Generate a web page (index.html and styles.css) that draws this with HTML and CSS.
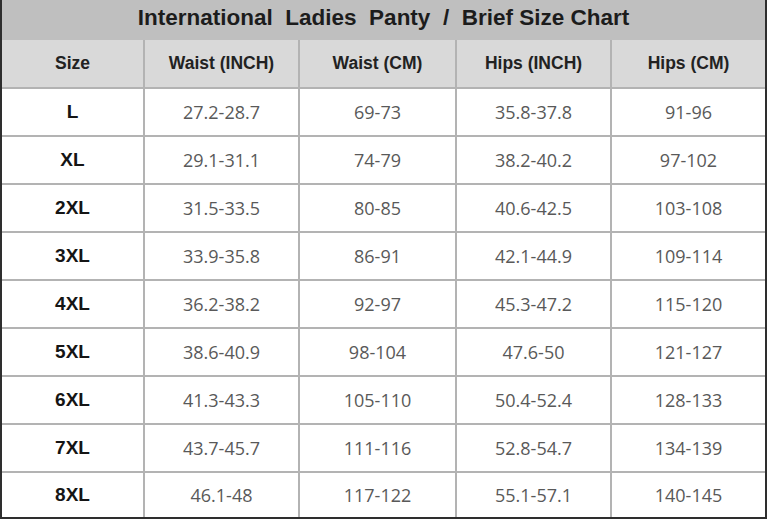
FILE: index.html
```html
<!DOCTYPE html>
<html>
<head>
<meta charset="utf-8">
<link rel="stylesheet" href="styles.css">
</head>
<body>
<div class="chart">
  <div class="title">International  Ladies  Panty  /  Brief Size Chart</div>
  <div class="grid">
    <div class="cell head first">Size</div>
    <div class="cell head">Waist (INCH)</div>
    <div class="cell head">Waist (CM)</div>
    <div class="cell head">Hips (INCH)</div>
    <div class="cell head">Hips (CM)</div>

    <div class="cell size first">L</div><div class="cell val">27.2-28.7</div><div class="cell val">69-73</div><div class="cell val">35.8-37.8</div><div class="cell val">91-96</div>
    <div class="cell size first">XL</div><div class="cell val">29.1-31.1</div><div class="cell val">74-79</div><div class="cell val">38.2-40.2</div><div class="cell val">97-102</div>
    <div class="cell size first">2XL</div><div class="cell val">31.5-33.5</div><div class="cell val">80-85</div><div class="cell val">40.6-42.5</div><div class="cell val">103-108</div>
    <div class="cell size first">3XL</div><div class="cell val">33.9-35.8</div><div class="cell val">86-91</div><div class="cell val">42.1-44.9</div><div class="cell val">109-114</div>
    <div class="cell size first">4XL</div><div class="cell val">36.2-38.2</div><div class="cell val">92-97</div><div class="cell val">45.3-47.2</div><div class="cell val">115-120</div>
    <div class="cell size first">5XL</div><div class="cell val">38.6-40.9</div><div class="cell val">98-104</div><div class="cell val">47.6-50</div><div class="cell val">121-127</div>
    <div class="cell size first">6XL</div><div class="cell val">41.3-43.3</div><div class="cell val">105-110</div><div class="cell val">50.4-52.4</div><div class="cell val">128-133</div>
    <div class="cell size first">7XL</div><div class="cell val">43.7-45.7</div><div class="cell val">111-116</div><div class="cell val">52.8-54.7</div><div class="cell val">134-139</div>
    <div class="cell size first">8XL</div><div class="cell val">46.1-48</div><div class="cell val">117-122</div><div class="cell val">55.1-57.1</div><div class="cell val">140-145</div>
  </div>
</div>
</body>
</html>
```

FILE: styles.css
```css
html, body {
  margin: 0;
  padding: 0;
  background: #ffffff;
}

.chart {
  width: 763px;
  border-left: 2px solid #2e2e2e;
  border-right: 2px solid #2e2e2e;
  border-bottom: 2px solid #2e2e2e;
}

.title {
  height: 36px;
  padding-bottom: 4px;
  background: #bfbfbf;
  color: #1c1c1c;
  font-family: "Liberation Sans", Arial, sans-serif;
  font-weight: bold;
  font-size: 22.5px;
  white-space: pre;
  display: flex;
  align-items: center;
  justify-content: center;
}

.grid {
  display: grid;
  grid-template-columns: 141px 155px 157px 155px 155px;
  grid-template-rows: 47px repeat(8, 48px) 46px;
}

.cell {
  display: flex;
  align-items: center;
  justify-content: center;
  border-left: 2px solid #b3b3b3;
  border-top: 2px solid #b3b3b3;
}

.cell.first {
  border-left: none;
}

.cell.head {
  border-top: none;
  background: #d9d9d9;
  color: #222222;
  font-family: "Liberation Sans", Arial, sans-serif;
  font-weight: bold;
  font-size: 17.5px;
}

.cell.size {
  color: #151515;
  font-family: "Liberation Sans", Arial, sans-serif;
  font-weight: bold;
  font-size: 19px;
}

.cell.val {
  color: #595959;
  font-family: "Open Sans", "Noto Sans", sans-serif;
  font-size: 18px;
}
```
